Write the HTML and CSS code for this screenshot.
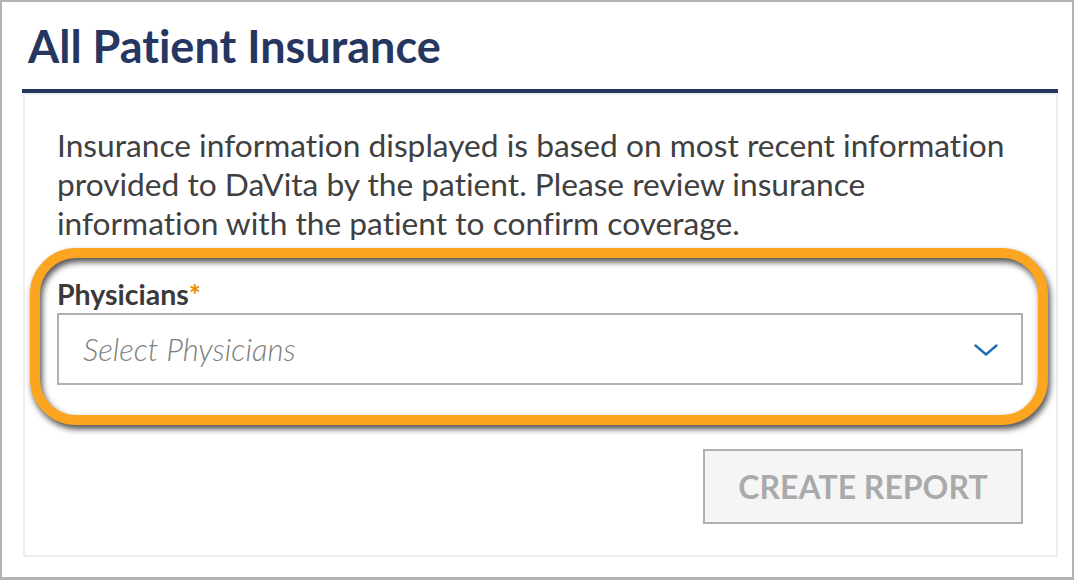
FILE: index.html
```html
<!DOCTYPE html>
<html lang="en">
<head>
<meta charset="utf-8">
<title>All Patient Insurance</title>
<link rel="stylesheet" href="styles.css">
</head>
<body>
<div class="frame">
  <section class="panel">
    <h1 class="panel-title">All Patient Insurance</h1>
    <div class="card">
      <p class="intro">Insurance information displayed is based on most recent information provided to DaVita by the patient. Please review insurance information with the patient to confirm coverage.</p>
      <div class="field">
        <label class="field-label">Physicians<span class="req">*</span></label>
        <div class="select">
          <span class="placeholder">Select Physicians</span>
          <svg class="chevron" width="24" height="12" viewBox="0 0 24 12" aria-hidden="true">
            <polyline points="1.5,1.5 12,10.5 22.5,1.5" fill="none" stroke="#1c6db4" stroke-width="2.4" stroke-linecap="round" stroke-linejoin="miter"/>
          </svg>
        </div>
      </div>
      <div class="actions">
        <button class="btn" type="button" disabled>CREATE REPORT</button>
      </div>
      <div class="highlight" aria-hidden="true"></div>
    </div>
  </section>
</div>
</body>
</html>
```

FILE: styles.css
```css
* { box-sizing: border-box; }
html, body { margin: 0; padding: 0; background: #fff; }
body {
  font-family: Lato, "Open Sans", "Liberation Sans", sans-serif;
  font-variant-ligatures: none;
  font-feature-settings: "liga" 0, "clig" 0;
}

.frame {
  width: 1074px;
  height: 580px;
  border: 2px solid #b3b3b3;
  border-bottom-width: 3px;
  padding: 17px 14px 0 20px;
}

.panel { width: 1036px; }

.panel-title {
  margin: 0;
  padding: 0 0 16px 6px;
  font-size: 45px;
  line-height: 1.2;
  font-weight: 700;
  color: #253761;
  border-bottom: 4px solid #253761;
}

.card {
  position: relative;
  margin-left: 1px;
  border: 2px solid #eeeeee;
  padding: 31px 33px 31px 32px;
}

.intro {
  margin: 0;
  font-size: 31.7px;
  line-height: 39px;
  color: #404040;
}

.field { margin-top: 34px; }

.field-label {
  display: block;
  font-size: 28.5px;
  line-height: 1.2;
  font-weight: 700;
  color: #3a3a3a;
  margin-bottom: 2px;
}

.req {
  color: #f08c00;
}

.select {
  height: 72px;
  border: 2px solid #b0b0b0;
  display: flex;
  align-items: center;
  justify-content: space-between;
  padding: 0 23px 0 24px;
}

.placeholder {
  font-size: 31px;
  font-style: italic;
  font-weight: 300;
  color: #808080;
}

.chevron { display: block; margin-top: 2px; }

.actions {
  display: flex;
  justify-content: flex-end;
  margin-top: 64px;
}

.btn {
  width: 320px;
  height: 75px;
  border: 2px solid #b0b0b0;
  background: #f5f5f5;
  color: #aaaaaa;
  font-family: Lato, "Open Sans", "Liberation Sans", sans-serif;
  font-variant-ligatures: none;
  font-weight: 700;
  font-size: 32px;
  padding: 0;
}

.highlight {
  position: absolute;
  left: 5px;
  top: 153px;
  width: 1018px;
  height: 177px;
  border: 10px solid #fba521;
  border-radius: 46px;
  filter: drop-shadow(2px 4px 3px rgba(0, 0, 0, 0.7));
  pointer-events: none;
}
```
